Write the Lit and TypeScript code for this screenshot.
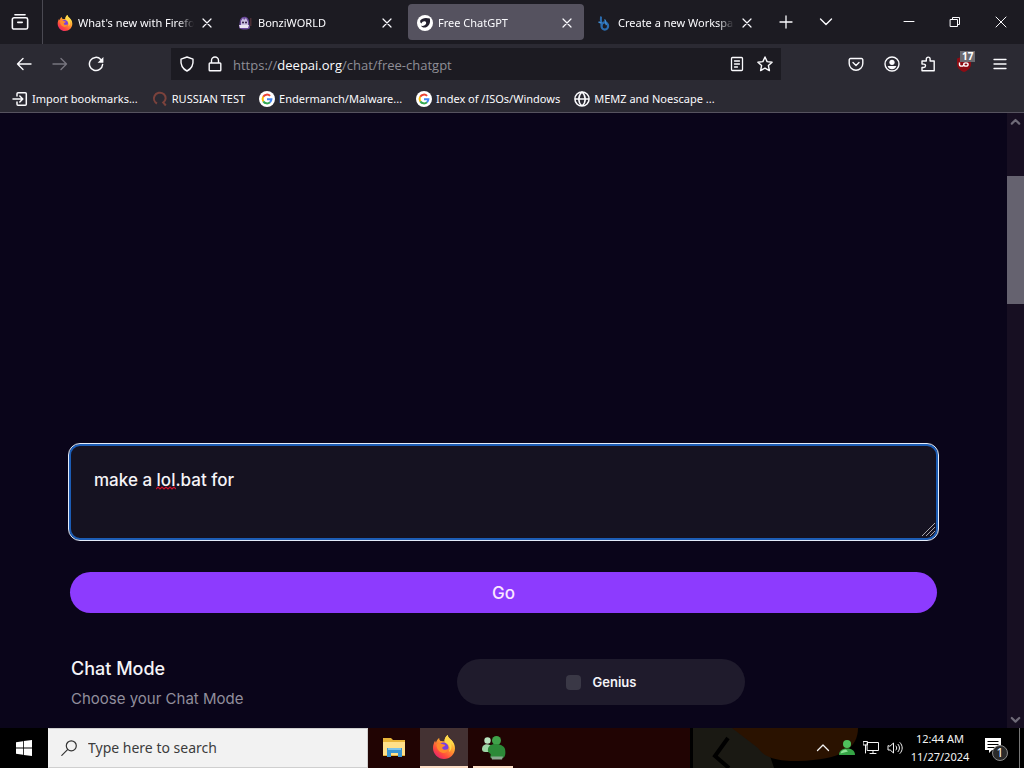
import { LitElement, html, css, TemplateResult } from "lit";
import { customElement } from "lit/decorators.js";
import { classMap } from "lit/directives/class-map.js";

const line = (d: string, w = 1.4) =>
  html`<svg class="ico" viewBox="0 0 16 16" fill="none" stroke="currentColor" stroke-width=${w} stroke-linecap="round" stroke-linejoin="round" aria-hidden="true"><path d=${d}></path></svg>`;

const firefoxLogo = html`<svg class="logo" viewBox="0 0 24 24" aria-hidden="true">
  <defs>
    <linearGradient id="ff" x1="0.8" y1="0.1" x2="0.2" y2="0.95">
      <stop offset="0" stop-color="#ffe14a"></stop><stop offset="0.4" stop-color="#ff9a2e"></stop>
      <stop offset="0.75" stop-color="#ff4a3d"></stop><stop offset="1" stop-color="#e4256f"></stop>
    </linearGradient>
  </defs>
  <path fill="url(#ff)" d="M1 13c0-3 1-5.500 2.200-7.500 0 1.100.3 1.800.8 2.300C4.400 5.600 5.700 4 7.300 3c-.2 1.200.2 2.300 1.200 2.900 1.200.1 3 .1 4 .5C12.600 3.600 13.500 1.500 15.700 0c.2 2.500 2.300 3.600 4.100 5.500 2 2.100 3.200 4.600 3.200 7.700C23 19.300 18 24 12 24S1 19 1 13z"></path>
  <circle cx="11.600" cy="12.300" r="4.800" fill="#7a3fe0"></circle>
  <path fill="#ff8a2b" d="M4.500 9.500c2-1.400 4-1.300 5.600-.4 1.200.6 2.600.2 3.200 1.100-.5 1.300-2.600 1.400-3 2.400-.3 1 .9 2.500 3 2.200 1.300-.2 2-.8 3-.5-.8 2.600-3 3.900-5.400 3.600-3.700-.4-6.200-3.600-6.400-8.400z"></path>
  <path fill="#ffd84a" d="M15.700 0c.2 2.500 2.300 3.600 4.100 5.500 1.600 1.800 2.300 4 2.100 6.500-.6-1.800-1.500-3-2.700-3.800 1 3.700.2 7-2.200 8.800 1.200-3 .8-6-1.500-8.100-1.400-1-2.800-1.600-3-3C12.600 3.600 13.500 1.500 15.700 0z"></path>
</svg>`;

const bonziLogo = html`<svg class="logo" viewBox="0 0 16 16" aria-hidden="true">
  <path fill="#69489a" d="M3 5c1-3 4-4 6-3 2 .8 3 3 3 5l1 6c-2 2-8 2-11 0z"></path>
  <path fill="#c9bde0" d="M4 6l2-3 1 2 2-2 2 4v3H4z"></path>
  <path fill="#e9e3f2" d="M2 10h10l-1 3H3z"></path>
  <circle cx="6" cy="7.500" r="1" fill="#2a1640"></circle><circle cx="9" cy="7.500" r="1" fill="#2a1640"></circle>
  <path fill="#4b2f35" d="M13 3h1.500v8H13z"></path>
</svg>`;

const deepLogo = html`<svg class="logo" viewBox="0 0 16 16" aria-hidden="true">
  <circle cx="8" cy="8" r="8" fill="#fff"></circle>
  <path fill="#23202e" d="M3.200 5.500C5 3 8.500 2.200 12.800 3.500c1 4.500-.8 8-4.300 8.900-2 .5-3.800-.2-4.400-1.600 2.300.4 4.400-.4 5-2.300.3-1.200-.3-2-1.400-2.200C6.300 6.100 5 7 4.500 8.500 3.600 8 3 7 3.200 5.500z"></path>
</svg>`;

const blueLogo = html`<svg class="logo" viewBox="0 0 16 16" fill="none" stroke="#2a6cb0" aria-hidden="true">
  <path stroke-width="2" d="M4 1.500c-.6 3 0 6 .8 9"></path>
  <ellipse cx="7.800" cy="11" rx="3.300" ry="3.700" stroke-width="2.200"></ellipse>
  <path stroke-width="1.500" stroke="#3f8bd0" d="M7.500 4.500c1.800 1.200.6 3.600 2 5.500M1.500 7l3 1"></path>
</svg>`;

const googleLogo = html`<svg class="logo" viewBox="0 0 16 16" fill="none" stroke-width="2" aria-hidden="true">
  <circle cx="8" cy="8" r="8" fill="#fff"></circle>
  <path stroke="#ea4335" d="M4.200 5.800A4.400 4.400 0 0 1 11.100 4.900"></path>
  <path stroke="#fbbc05" d="M4.300 10.400A4.400 4.400 0 0 1 4.200 5.800"></path>
  <path stroke="#34a853" d="M11 11.200A4.400 4.400 0 0 1 4.300 10.400"></path>
  <path stroke="#4285f4" d="M8 8.200h4.400A4.400 4.400 0 0 1 11 11.200"></path>
</svg>`;

const questLogo = html`<svg class="logo" viewBox="0 0 16 16" fill="none" stroke="#7b423c" stroke-width="2" aria-hidden="true">
  <path d="M5 12.500A5.800 5.800 0 0 1 2.500 5C4 1.500 9 .6 12 3.200c2.600 2.600 2 6.300-.8 8.300l2.600 3"></path>
</svg>`;

const globe = line("M8 .9a7.100 7.100 0 1 0 0 14.200A7.100 7.100 0 0 0 8 .9zM1 8h14M8 1C3.700 4.800 3.700 11.200 8 15M8 1c4.300 3.800 4.300 10.200 0 14", 1.5);
const importIcon = line("M5 5V2.700a1 1 0 0 1 1-1h7.300a1 1 0 0 1 1 1v10.600a1 1 0 0 1-1 1H6a1 1 0 0 1-1-1V11M1 8h9.500M7.800 5l3 3-3 3", 1.5);
const closeIcon = line("M4 4l8 8M12 4l-8 8", 1.2);

interface Item { label: string; icon: TemplateResult; active?: boolean }

const tabs: Item[] = [
  { label: "What's new with Firefox", icon: firefoxLogo },
  { label: "BonziWORLD", icon: bonziLogo },
  { label: "Free ChatGPT", icon: deepLogo, active: true },
  { label: "Create a new Workspace", icon: blueLogo },
];

const bookmarks: Item[] = [
  { label: "Import bookmarks...", icon: importIcon },
  { label: "RUSSIAN TEST", icon: questLogo },
  { label: "Endermanch/Malware...", icon: googleLogo },
  { label: "Index of /ISOs/Windows", icon: googleLogo },
  { label: "MEMZ and Noescape ...", icon: globe },
];

const shared = css`
  * { box-sizing: border-box; }
  button, input, textarea { font: inherit; color: inherit; margin: 0; padding: 0; border: 0; border-radius: 0; background: none; outline: none; }
  button { display: flex; align-items: center; justify-content: center; }
  a { color: inherit; text-decoration: none; }
  svg { display: block; flex: none; }
  .ico, .logo { width: 16px; height: 16px; }
`;

@customElement("browser-chrome")
class BrowserChrome extends LitElement {
  static styles = [shared, css`
    :host { display: block; background: #2b2a33; color: #fbfbfe; font: 11px/16px "Noto Sans", sans-serif; border-bottom: 1px solid #56535f; }
    .tabs { display: flex; height: 44px; background: #1c1b22; align-items: center; }
    .view { width: 43px; padding-right: 3px; align-self: stretch; border-right: 1px solid #4a4952; }
    .view .ico { width: 18px; height: 18px; }
    .strip { display: flex; gap: 4px; margin: 0 2px 0 5px; min-width: 0; }
    .tab { display: flex; align-items: center; gap: 5px; width: 176px; height: 36px; padding: 1px 8px 0 9px; border-radius: 4px; min-width: 0; }
    .tab.active { background: #55525f; }
    .title { flex: 1; overflow: hidden; white-space: nowrap; mask-image: linear-gradient(to left, transparent, #000 16px); }
    .close { width: 18px; height: 20px; margin-left: -1px; }
    .tool { width: 40px; height: 36px; flex: none; }
    .win { display: flex; margin-left: auto; }
    .win button { width: 46px; height: 44px; }
    .nav { display: flex; align-items: center; height: 40px; padding: 0 6px; }
    .nav > button, .actions button { width: 36px; height: 32px; position: relative; }
    .dim { color: #77757f; }
    .actions { display: flex; }
    .url { flex: 1; display: flex; align-items: center; height: 32px; margin: 0 57px; padding: 0 8px; gap: 12px; background: #1c1b22; min-width: 0; }
    .field { flex: 1; min-width: 0; font: 13px/20px "Open Sans", sans-serif; padding-top: 2px; color: #8f8e96; margin-left: -2px; }
    .host { color: #fbfbfe; }
    .badge { position: absolute; left: 14px; top: 3px; background: #6b6a70; color: #fff; font: bold 10px/11px "Open Sans", sans-serif; padding: 0 2px; }
    .marks { display: flex; align-items: center; gap: 14px; height: 28px; padding: 1px 12px 0; }
    .marks a { display: flex; align-items: center; gap: 4px; white-space: nowrap; }
  `];

  render() {
    return html`
      <div class="tabs">
        <button class="view" aria-label="View recent browsing">${line("M3.500 1.500h9M2.700 4.200h10.600a1.500 1.500 0 0 1 1.500 1.500v7.100a1.500 1.500 0 0 1-1.500 1.500H2.700a1.500 1.500 0 0 1-1.500-1.500V5.700a1.500 1.500 0 0 1 1.500-1.500zM6 8.300h4")}</button>
        <div class="strip">
          ${tabs.map((t) => html`<div class=${classMap({ tab: true, active: !!t.active })}>
            ${t.icon}<span class="title">${t.label}</span>
            <button class="close" aria-label="Close tab">${closeIcon}</button>
          </div>`)}
        </div>
        <button class="tool" aria-label="New tab">${line("M8 2v12M2 8h12", 1.300)}</button>
        <button class="tool" aria-label="List all tabs">${line("M2.500 5L8 10.500 13.500 5", 1.400)}</button>
        <div class="win">
          <button aria-label="Minimize">${line("M3 7.500h10", 1)}</button>
          <button aria-label="Restore">${line("M3.500 5.500h7v7h-7zM5.500 5.500v-2h7v7h-2", 1)}</button>
          <button aria-label="Close">${line("M3 3l10 10M13 3L3 13", 1)}</button>
        </div>
      </div>
      <div class="nav">
        <button aria-label="Back">${line("M15 8H1.500M7 2.500L1.500 8 7 13.500")}</button>
        <button class="dim" aria-label="Forward">${line("M1 8h13.500M9 2.500L14.500 8 9 13.500")}</button>
        <button aria-label="Reload"><svg class="ico" viewBox="0 0 16 16" fill="none" stroke="currentColor" stroke-width="1.500" stroke-linecap="round"><path d="M12.800 3.400A6.600 6.600 0 1 0 14.600 8.500"></path><path fill="currentColor" stroke="none" d="M15.400 1v5.200a.6.600 0 0 1-.6.600H9.600z"></path></svg></button>
        <div class="url">
          ${line("M8 1L14 3.200C14.600 9 12 13 8 15 4 13 1.400 9 2 3.200z")}
          ${line("M3 7h10a.8.800 0 0 1 .8.800v6.100a.8.800 0 0 1-.8.800H3a.8.800 0 0 1-.8-.8V7.800A.8.800 0 0 1 3 7zM4.500 7V4.500a3.500 3.500 0 0 1 7 0V7")}
          <div class="field">https://<span class="host">deepai.org</span>/chat/free-chatgpt</div>
          ${line("M3.500 1.500h9a1 1 0 0 1 1 1v11a1 1 0 0 1-1 1h-9a1 1 0 0 1-1-1v-11a1 1 0 0 1 1-1zM5.500 5h5M5.500 8h5M5.500 11h3", 1.300)}
          ${line("M8 1l2.100 4.600 5 .6-3.700 3.400 1 5L8 12.100l-4.400 2.500 1-5L.9 6.200l5-.6z")}
        </div>
        <div class="actions">
          <button aria-label="Save to Pocket">${line("M2.500 2.500h11a1.300 1.300 0 0 1 1.300 1.300V7.500a6.800 6.800 0 0 1-13.600 0V3.800A1.300 1.300 0 0 1 2.500 2.500zM5 6.500l3 3 3-3")}</button>
          <button aria-label="Account"><svg class="ico" viewBox="0 0 16 16" fill="none" stroke="currentColor" stroke-width="1.400"><circle cx="8" cy="8" r="7"></circle><circle cx="8" cy="6.300" r="2.600" fill="currentColor" stroke="none"></circle><path fill="currentColor" stroke="none" d="M3.600 10h8.800c-.8 2.100-2.400 3.300-4.400 3.300S4.400 12.100 3.600 10z"></path></svg></button>
          <button aria-label="Extensions">${line("M2 14.700V11.500h1.800a1.700 1.700 0 0 0 0-3.400H2V5h4.300V3a1.900 1.900 0 0 1 3.800 0v2h4.100v9.700z")}</button>
          <button aria-label="uBlock Origin"><svg class="ico" viewBox="0 0 16 16"><path fill="#8d0c14" d="M8 0l7 2.500V8c0 4-3 6.500-7 8-4-1.500-7-4-7-8V2.500z"></path><path fill="none" stroke="#fff" stroke-width="1.400" d="M3.500 6.500v2c0 2.200 4.300 2.200 4.300 0v-1M7.800 8.500c0 2.200 4.300 2.200 4.300 0s-4.300-2.200-4.300 0"></path></svg><span class="badge">17</span></button>
          <button aria-label="Menu">${line("M2 3.500h12M2 8h12M2 12.500h12", 1.300)}</button>
        </div>
      </div>
      <nav class="marks">${bookmarks.map((b) => html`<a href="#">${b.icon}<span>${b.label}</span></a>`)}</nav>
    `;
  }
}

@customElement("chat-page")
class ChatPage extends LitElement {
  static styles = [shared, css`
    :host { display: flex; min-height: 0; overflow: hidden; background: #0a051a; color: #f5f4f8; font: 500 17px/24px Inter, sans-serif; }
    .page { flex: 1; min-width: 0; padding: 330px 70px 0; }
    .prompt { position: relative; margin: 0 -2px; height: 98px; }
    textarea { display: block; width: 100%; height: 100%; padding: 24px 25px; resize: none; background: #151221; border: 1px solid #e4ecfa; border-radius: 12px; box-shadow: inset 0 0 0 2px #1c5cb4; }
    .squiggle { position: absolute; left: 88px; top: 43px; width: 20px; height: 4px; }
    .grip { position: absolute; right: 4px; bottom: 5px; width: 13px; height: 13px; }
    .go { width: 100%; height: 41px; margin-top: 31px; border-radius: 21px; background: #8d3bfe; color: #fbe6ff; }
    .mode { display: grid; grid-template-columns: 386px minmax(0, 288px); padding: 0 1px; margin-top: 40px; align-items: center; }
    .caption { padding-top: 2px; }
    h2 { margin: 0; font: 500 18px/28px Inter, sans-serif; }
    p { margin: 4px 0 0; font: 400 15px/24px Inter, sans-serif; color: #918e9c; }
    .pill { display: flex; align-items: center; justify-content: center; gap: 12px; height: 46px; border-radius: 23px; background: #1f1b2c; font: 600 13px/20px Inter, sans-serif; }
    input { appearance: none; width: 15px; height: 15px; border-radius: 4px; background: #3a3846; }
    .bar { width: 17px; background: #170f22; display: flex; flex-direction: column; align-items: center; color: #6f6b78; }
    .thumb { width: 17px; height: 128px; margin: 46px 0 auto; background: #65626f; }
    .bar .ico { width: 17px; height: 17px; }
  `];

  render() {
    return html`
      <div class="page">
        <div class="prompt">
          <textarea aria-label="Message" spellcheck="false" .value=${"make a lol.bat for"}></textarea>
          <svg class="squiggle" viewBox="0 0 20 4" fill="none" stroke="#d3122c" stroke-width="1.200" aria-hidden="true"><path d="M0 3L2 1l2 2 2-2 2 2 2-2 2 2 2-2 2 2 2-2 2 2"></path></svg>
          <svg class="grip" viewBox="0 0 13 13" stroke="#a9a7ad" stroke-width="1" aria-hidden="true"><path d="M0 13L13 0M4 13L13 4M8 13L13 8"></path></svg>
        </div>
        <button class="go">Go</button>
        <div class="mode">
          <div class="caption"><h2>Chat Mode</h2><p>Choose your Chat Mode</p></div>
          <label class="pill"><input type="checkbox" />Genius</label>
        </div>
      </div>
      <div class="bar">
        ${line("M4.500 10L8 6.500l3.500 3.500", 2)}
        <div class="thumb"></div>
        ${line("M4.500 6.500L8 10l3.500-3.500", 2)}
      </div>
    `;
  }
}

@customElement("task-bar")
class TaskBar extends LitElement {
  static styles = [shared, css`
    :host { display: flex; position: relative; height: 40px; overflow: hidden; background: #000; color: #f4f4f4; font: 11px/18px "Noto Sans", sans-serif; }
    .art { position: absolute; left: 368px; top: 0; width: 656px; height: 40px; }
    .start { width: 48px; }
    .search { display: flex; align-items: center; gap: 11px; width: 320px; padding: 0 12px; background: #f2f2f2; border: 1px solid #cfcfcf; border-left-color: #f2f2f2; color: #333; }
    .search input { flex: 1; min-width: 0; font-size: 14px; line-height: 20px; }
    .search input::placeholder { color: #3c3c3c; opacity: 1; }
    .apps { display: flex; gap: 2px; margin-left: 2px; position: relative; }
    .apps button { width: 48px; border-bottom: 2px solid transparent; }
    .apps .on { background: #443233; border-color: #fbdcc4; }
    .apps .run { background: linear-gradient(#fbdcc4, #fbdcc4) 3px 38px / 40px 2px no-repeat; border: 0; }
    .apps .logo { width: 24px; height: 24px; }
    .tray { display: flex; align-items: center; margin-left: auto; position: relative; }
    .tray button { width: 24px; height: 40px; }
    .clock { width: 66px; text-align: center; white-space: nowrap; }
    .tray .note { width: 47px; border-right: 1px solid #777; margin-right: 4px; }
    .note svg { width: 26px; height: 26px; }
  `];

  render() {
    return html`
      <svg class="art" viewBox="0 0 656 40" preserveAspectRatio="none" aria-hidden="true">
        <path fill="#210403" d="M0 0h322v40H0z"></path>
        <path fill="#1a1913" d="M325 0h50l25 22 6 18h-81z"></path>
        <path fill="#2a1200" d="M364 0h126c0 20-16 32-60 33-26 0-34-5-40-13z"></path>
        <path fill="none" stroke="#000" stroke-width="4" d="M360 10l-13 18 14 12"></path>
      </svg>
      <button class="start" aria-label="Start"><svg class="ico" viewBox="0 0 16 16" fill="#fff"><path d="M0 2.200L7 1.200V7.600H0zM7.800 1.100L16 0v7.600H7.800zM0 8.400h7v6.400L0 13.800zM7.800 8.400H16V16l-8.200-1.100z"></path></svg></button>
      <label class="search">
        ${line("M10.300 .8a5 5 0 1 0 0 10 5 5 0 0 0 0-10zM6.800 9.300L.8 15.300", 1.200)}
        <input type="text" aria-label="Search" placeholder="Type here to search" />
      </label>
      <div class="apps">
        <button aria-label="File Explorer"><svg class="logo" viewBox="0 0 24 24"><path fill="#e9b53a" d="M1 3h8l2 2h12v16H1z"></path><path fill="#ffe08a" d="M1 7h22v13H1z"></path><path fill="#3b96d2" d="M5 13h15v9h-4v-4H9v4H5z"></path><path fill="#7cc3ea" d="M6 13h13v2H6z"></path></svg></button>
        <button class="on" aria-label="Firefox">${firefoxLogo}</button>
        <button class="run" aria-label="Messenger"><svg class="logo" viewBox="0 0 24 24"><circle cx="5.500" cy="4.500" r="3.200" fill="#b9e4bf"></circle><path fill="#9fd6a6" d="M0 13c0-6 8-6 10-2v5H3c-2 0-3-1-3-3z"></path><circle cx="14.500" cy="4.500" r="4.500" fill="#3fa24a"></circle><path fill="#2c8a38" d="M6 13c1-7 15-6 17 0 1 5 0 8-2 9H9c-2-1 1-3-1-4.500S5.500 15 6 13z"></path><path fill="#8aa890" d="M9 20.500h12l-1 3H10z"></path></svg></button>
      </div>
      <div class="tray">
        <button aria-label="Show hidden icons">${line("M2.500 10.500L8 5l5.500 5.500", 1.300)}</button>
        <button aria-label="Messenger status"><svg class="ico" viewBox="0 0 16 16"><circle cx="8" cy="4" r="4" fill="#4fc05c"></circle><path fill="#35a545" d="M0 15c0-5 4-6.500 8-6.500s8 1.500 8 6.500z"></path><path fill="#8be394" d="M1.500 13.500c.5-3 3-4 5.500-4l2 2z"></path></svg></button>
        <button aria-label="Network">${line("M4.500 2.500h11v8h-11zM7 13.500h6M10 10.500v3M.5 1.500h4v3.500h-4zM2.500 5v8", 1)}</button>
        <button aria-label="Volume">${line("M1 6v4h2.200L6.500 13V3L3.200 6zM9 6c1 1.200 1 2.800 0 4M11 4.300c2 2.200 2 5.200 0 7.400M13 2.600c3 3.200 3 7.600 0 10.800", 1)}</button>
        <div class="clock">12:44 AM<br />11/27/2024</div>
        <button class="note" aria-label="Notifications"><svg viewBox="0 0 26 26"><path fill="#fff" d="M2 3h16v12H9l-3 3v-3H2z"></path><path stroke="#000" d="M4.500 6.500h11M4.500 9.500h11M4.500 12.500h7"></path><circle cx="17" cy="18" r="7.500" fill="#2a2a2a" stroke="#8a8a8a"></circle><text x="17" y="22" text-anchor="middle" fill="#fff" font-family="Noto Sans" font-size="12">1</text></svg></button>
      </div>
    `;
  }
}

@customElement("app-root")
class AppRoot extends LitElement {
  static styles = css`
    :host { display: grid; grid-template-rows: auto minmax(0, 1fr) auto; grid-template-columns: minmax(0, 1fr); height: 100vh; overflow: hidden; }
  `;
  render() {
    return html`<browser-chrome></browser-chrome><chat-page></chat-page><task-bar></task-bar>`;
  }
}
